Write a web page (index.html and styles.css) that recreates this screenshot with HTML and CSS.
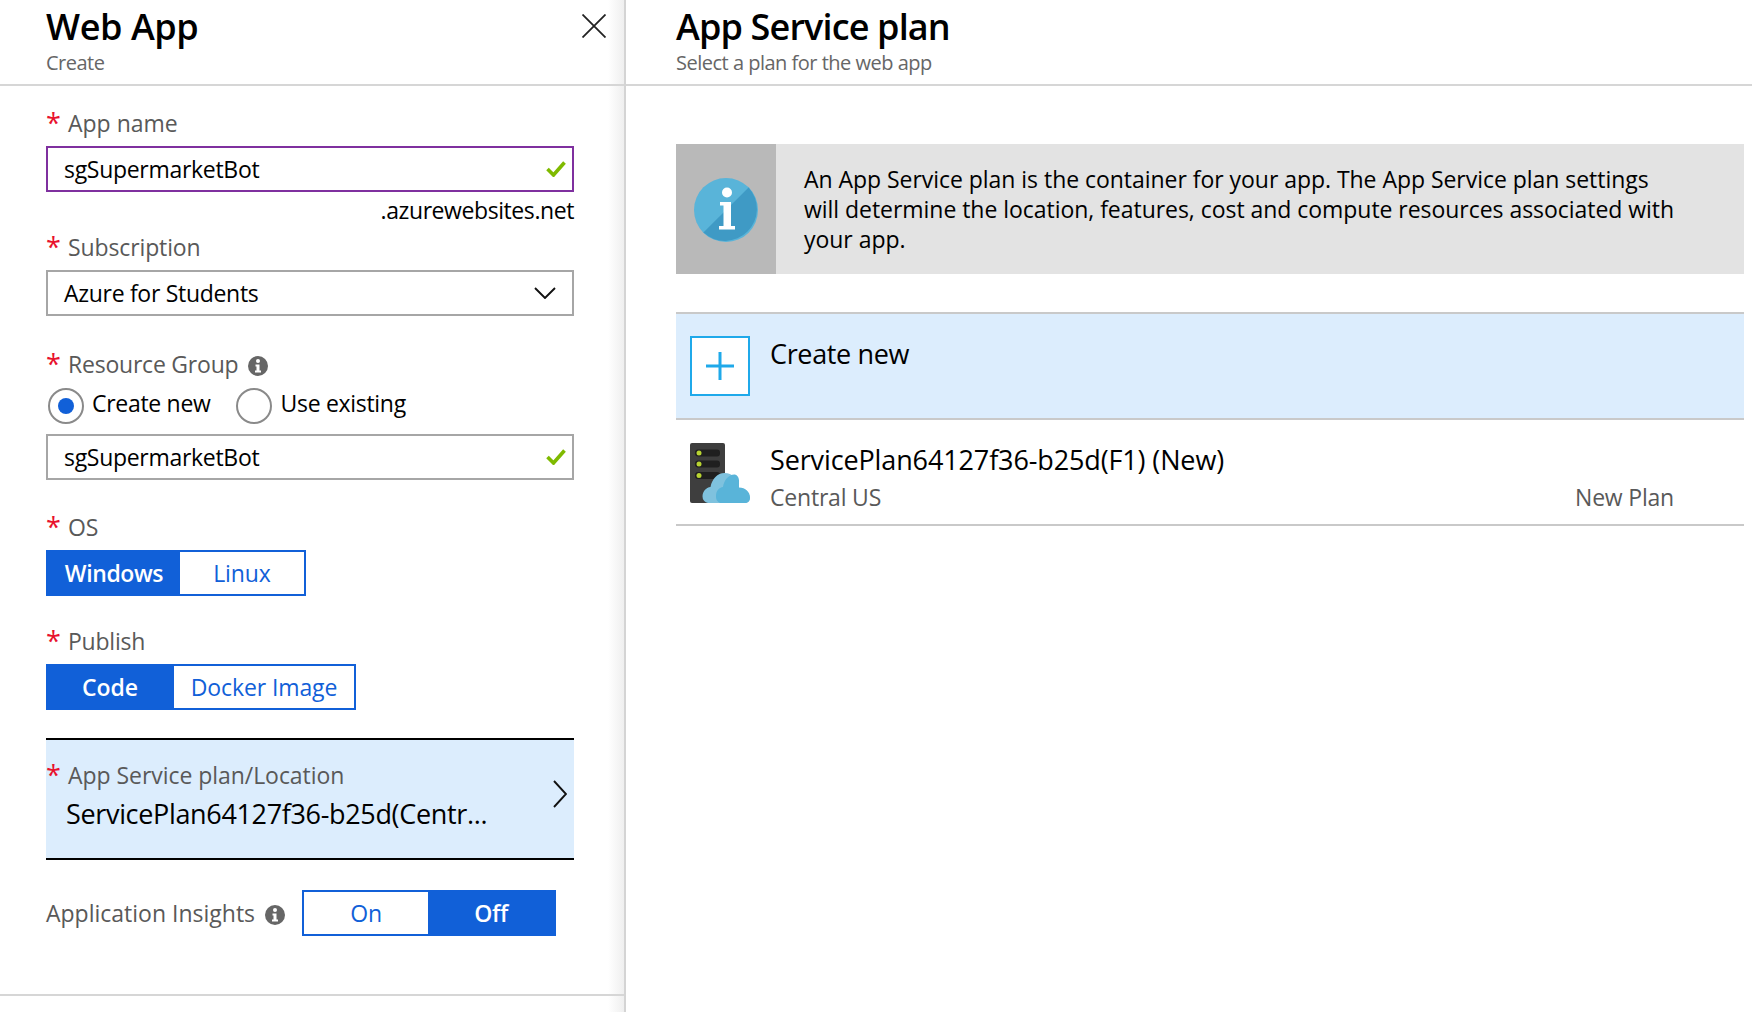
FILE: index.html
```html
<!DOCTYPE html>
<html lang="en">
<head>
<meta charset="utf-8">
<title>Web App - Create</title>
<link rel="stylesheet" href="styles.css">
</head>
<body>
<div class="desk">
  <section class="blade left">
    <header class="head">
      <div class="head-text">
        <h1 class="title">Web App</h1>
        <p class="subtitle">Create</p>
      </div>
      <svg class="close" viewBox="0 0 24 24" width="24" height="24"><path d="M0.5 0.5L23.5 23.5M23.5 0.5L0.5 23.5" fill="none" stroke="#222" stroke-width="1.8"/></svg>
    </header>
    <div class="form">
      <div class="label l-app"><span class="req">*</span>App name</div>
      <div class="input focus"><span>sgSupermarketBot</span>
        <svg class="check" viewBox="0 0 20 16" width="20" height="16"><path d="M1.5 8L7.5 14L18.5 1.5" fill="none" stroke="#7fba00" stroke-width="3.6"/></svg>
      </div>
      <div class="suffix">.azurewebsites.net</div>
      <div class="label l-sub"><span class="req">*</span>Subscription</div>
      <div class="input"><span>Azure for Students</span>
        <svg class="chev-down" viewBox="0 0 22 12" width="22" height="12"><path d="M1 1L11 11L21 1" fill="none" stroke="#111" stroke-width="1.9"/></svg>
      </div>
      <div class="label l-rg"><span class="req">*</span>Resource Group
        <svg class="tip" viewBox="0 0 20 20" width="20" height="20"><circle cx="10" cy="10" r="10" fill="#666"/><circle cx="10" cy="5" r="2" fill="#fff"/><path d="M7.5 8.5h4v6h1.5v2h-6v-2h1.5v-4h-1z" fill="#fff"/></svg>
      </div>
      <div class="radios">
        <span class="radio on"><i class="dot"></i></span><span class="radio-text first">Create new</span>
        <span class="radio"></span><span class="radio-text second">Use existing</span>
      </div>
      <div class="input"><span>sgSupermarketBot</span>
        <svg class="check" viewBox="0 0 20 16" width="20" height="16"><path d="M1.5 8L7.5 14L18.5 1.5" fill="none" stroke="#7fba00" stroke-width="3.6"/></svg>
      </div>
      <div class="label l-os"><span class="req">*</span>OS</div>
      <div class="toggle t-os"><span class="opt sel o-win">Windows</span><span class="opt o-lin">Linux</span></div>
      <div class="label l-pub"><span class="req">*</span>Publish</div>
      <div class="toggle t-pub"><span class="opt sel o-code">Code</span><span class="opt o-dock">Docker Image</span></div>
      <div class="plan">
        <div class="plan-text">
          <div class="plan-label"><span class="req">*</span>App Service plan/Location</div>
          <div class="plan-value">ServicePlan64127f36-b25d(Centr...</div>
        </div>
        <svg class="chev-right" viewBox="0 0 14 28" width="14" height="28"><path d="M1 1L13 14L1 27" fill="none" stroke="#111" stroke-width="1.9"/></svg>
      </div>
      <div class="insights">
        <span class="ins-label">Application Insights</span>
        <svg class="tip ins-tip" viewBox="0 0 20 20" width="20" height="20"><circle cx="10" cy="10" r="10" fill="#666"/><circle cx="10" cy="5" r="2" fill="#fff"/><path d="M7.5 8.5h4v6h1.5v2h-6v-2h1.5v-4h-1z" fill="#fff"/></svg>
        <div class="toggle t-ins"><span class="opt o-on">On</span><span class="opt sel o-off">Off</span></div>
      </div>
    </div>
    <div class="foot-line"></div>
  </section>
  <section class="blade right">
    <header class="head head-right">
      <div class="head-text">
        <h1 class="title">App Service plan</h1>
        <p class="subtitle">Select a plan for the web app</p>
      </div>
    </header>
    <div class="content">
      <div class="notice">
        <div class="notice-icon">
          <svg viewBox="0 0 64 64" width="64" height="64">
            <circle cx="32" cy="32" r="32" fill="#59b4d9"/>
            <path d="M9.4 54.6L54.6 9.400A32 32 0 0 1 9.400 54.600z" fill="#3f9ac5"/>
            <circle cx="33" cy="14.500" r="5" fill="#fff"/>
            <path d="M26 24h11v24h4v3.500H25v-3.500h4.500V27.500H26z" fill="#fff"/>
          </svg>
        </div>
        <p class="notice-text">An App Service plan is the container for your app. The App Service plan settings will determine the location, features, cost and compute resources associated with your app.</p>
      </div>
      <div class="row row-new">
        <div class="plus-box">
          <svg viewBox="0 0 28 28" width="28" height="28"><path d="M14 0V28M0 14H28" stroke="#1fa9ea" stroke-width="3" fill="none"/></svg>
        </div>
        <div class="row-new-text">Create new</div>
      </div>
      <div class="row row-plan">
        <svg class="server" viewBox="0 0 60 60" width="60" height="60">
          <rect width="35" height="60" rx="2" fill="#3e3e3e"/>
          <rect x="5" y="6.500" width="25" height="7" rx="3" fill="#1f1f1f"/>
          <rect x="5" y="17.500" width="25" height="7" rx="3" fill="#1f1f1f"/>
          <rect x="5" y="29" width="25" height="7" rx="3" fill="#1f1f1f"/>
          <circle cx="9" cy="10" r="2.500" fill="#b8d432"/>
          <circle cx="9" cy="21" r="2.500" fill="#b8d432"/>
          <circle cx="9" cy="32.500" r="2.500" fill="#b8d432"/>
          <path d="M18 60a6.500 6.500 0 0 1-5.500-6.500c0-5 3.500-9 8-9.500 1.500-8 7-14 14-14 8 0 13 6 14 15 6.500 0 11 4.500 11.500 10 0 3-2 5-5 5z" fill="#7fc2de"/>
          <path d="M30 60a7 7 0 0 1-4-7c0-5 3-8.500 7-9 1-7 6-13 12-12.500 5 2 4 6 4 13 6.500 0 11 4.500 11 10 0 3-2 5.500-5 5.500z" fill="#59b4d9"/>
        </svg>
        <div class="plan-cols">
          <div class="plan-name">ServicePlan64127f36-b25d(F1) (New)</div>
          <div class="plan-meta"><span>Central US</span><span>New Plan</span></div>
        </div>
      </div>
    </div>
  </section>
</div>
</body>
</html>
```

FILE: styles.css
```css
* { box-sizing: border-box; }
html, body { margin: 0; height: 100%; background: #fff; }
body { font-family: "Open Sans", "Noto Sans", sans-serif; color: #000; overflow: hidden; }
.desk { display: flex; height: 1012px; width: 1752px; }
.blade { height: 100%; }
.left { width: 626px; flex: none; border-right: 2px solid #d4d4d4; background: linear-gradient(to right, #fff 0, #fff 608px, #efefef 624px); position: relative; }
.right { flex: 1; }
.head { height: 86px; border-bottom: 2px solid #d6d6d6; padding-left: 46px; padding-right: 18px; display: flex; justify-content: space-between; align-items: flex-start; }
.head-right { padding-left: 50px; }
.title { margin: 0; padding-top: 5px; font-size: 36px; line-height: 44px; font-weight: 600; letter-spacing: -0.4px; }
.head-right .title { letter-spacing: -0.85px; }
.subtitle { margin: 0; padding-top: 1px; font-size: 20px; line-height: 26px; color: #666; letter-spacing: -0.5px; }
.close { margin-top: 14px; }
.form { padding-left: 46px; width: 574px; }
.label { display: flex; align-items: center; height: 30px; font-size: 23px; color: #595959; letter-spacing: -0.22px; }
.req { color: #e8112d; width: 22px; flex: none; font-size: 27px; line-height: 30px; height: 30px; letter-spacing: 0; }
.l-app { margin-top: 22px; margin-bottom: 8px; letter-spacing: 0; }
.l-sub { margin-top: 8px; margin-bottom: 8px; letter-spacing: -0.12px; }
.l-rg { margin-top: 33px; margin-bottom: 9px; }
.l-os { margin-top: 32px; margin-bottom: 8px; }
.l-pub { margin-top: 30px; margin-bottom: 8px; }
.tip { margin-left: 10px; flex: none; margin-top: 3px; }
.input { height: 46px; border: 2px solid #a6a6a6; padding: 0 14px 0 16px; display: flex; align-items: center; justify-content: space-between; font-size: 23px; letter-spacing: -0.3px; background: #fff; }
.input.focus { border-color: #7f309f; }
.check { margin-right: -8px; }
.chev-down { margin-right: 2px; }
.suffix { height: 28px; margin-top: 4px; line-height: 28px; text-align: right; font-size: 23px; letter-spacing: -0.42px; }
.radios { display: flex; align-items: center; height: 36px; margin-bottom: 10px; padding-left: 2px; }
.radio { width: 36px; height: 36px; border: 2px solid #8a8a8a; border-radius: 50%; display: flex; align-items: center; justify-content: center; flex: none; background: #fff; }
.dot { width: 16px; height: 16px; border-radius: 50%; background: #1160d8; }
.radio-text { font-size: 23px; letter-spacing: -0.3px; margin-left: 8px; padding-bottom: 6px; }
.radio-text.first { margin-right: 25px; }
.radio-text.second { margin-left: 9px; }
.toggle { display: flex; height: 46px; border: 2px solid #1160d8; font-size: 23px; letter-spacing: -0.1px; color: #1160d8; background: #fff; }
.t-os { width: 260px; }
.t-pub { width: 310px; }
.t-ins { width: 254px; flex: none; }
.opt { display: flex; align-items: center; justify-content: center; }
.sel { background: #1160d8; color: #fff; font-weight: 600; letter-spacing: -0.4px; }
.o-win { width: 132px; }
.o-lin { flex: 1; }
.o-code { width: 126px; letter-spacing: 0; padding-right: 2px; }
.o-dock { flex: 1; }
.o-on { width: 124px; }
.o-off { flex: 1; }
.plan { margin-top: 28px; height: 122px; border-top: 2px solid #000; border-bottom: 2px solid #000; background: #dcedfd; display: flex; justify-content: space-between; }
.plan-text { padding-top: 18px; }
.plan-label { display: flex; height: 34px; align-items: center; font-size: 23px; color: #595959; letter-spacing: -0.05px; }
.plan-value { margin-top: 4px; padding-left: 20px; font-size: 27px; line-height: 36px; letter-spacing: -0.34px; }
.chev-right { margin-top: 40px; margin-right: 7px; }
.insights { margin-top: 30px; display: flex; align-items: center; height: 46px; font-size: 23px; color: #595959; letter-spacing: 0; }
.ins-tip { margin-left: 10px; margin-right: 17px; }
.foot-line { position: absolute; left: 0; right: 0; top: 994px; height: 2px; background: #d6d6d6; }
.content { padding: 58px 8px 0 50px; }
.notice { display: flex; height: 130px; background: #e3e3e3; }
.notice-icon { width: 100px; flex: none; background: #b9b9b9; display: flex; align-items: center; justify-content: center; padding-top: 2px; }
.notice-text { margin: 0; padding: 20px 60px 0 28px; font-size: 23px; line-height: 30px; letter-spacing: -0.04px; }
.row { display: flex; padding-left: 14px; }
.row-new { margin-top: 38px; height: 108px; background: #dcedfd; border-top: 2px solid #c9c9c9; border-bottom: 2px solid #c9c9c9; padding-top: 22px; }
.plus-box { width: 60px; height: 60px; border: 2px solid #1fa9ea; background: #fff; display: flex; align-items: center; justify-content: center; flex: none; }
.row-new-text { margin-left: 20px; font-size: 27px; line-height: 34px; margin-top: 1px; letter-spacing: -0.35px; }
.row-plan { height: 106px; border-bottom: 2px solid #c9c9c9; padding-top: 23px; }
.server { flex: none; }
.plan-cols { margin-left: 20px; flex: 1; padding-right: 70px; }
.plan-name { font-size: 27px; line-height: 36px; letter-spacing: -0.13px; margin-top: -1px; }
.plan-meta { display: flex; justify-content: space-between; font-size: 23px; line-height: 30px; color: #595959; letter-spacing: -0.2px; margin-top: 4px; }
```
